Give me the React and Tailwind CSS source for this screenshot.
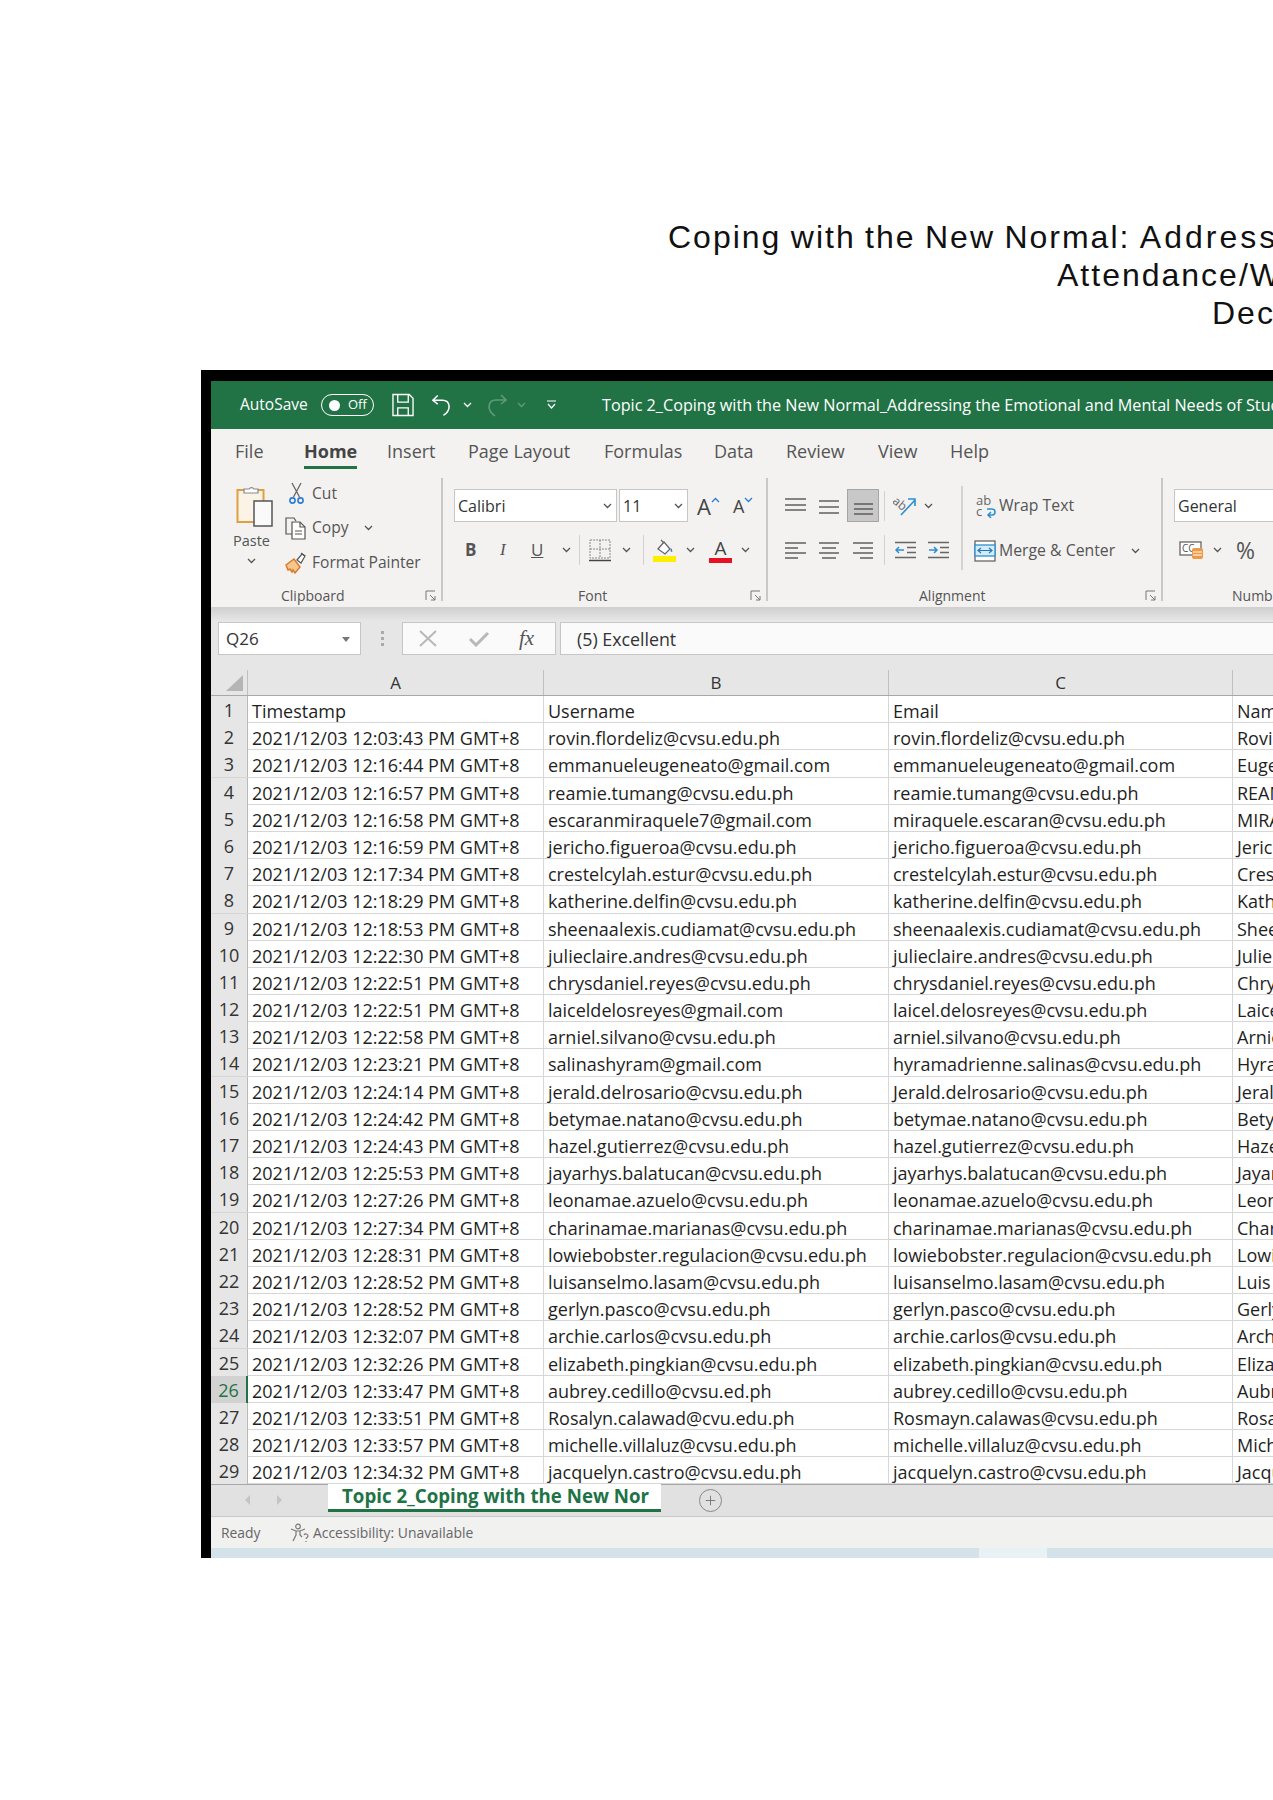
import React from "react";
import { Plus } from "lucide-react";

const rows = [
  ["Timestamp", "Username", "Email", "Name"],
  ["2021/12/03 12:03:43 PM GMT+8", "rovin.flordeliz@cvsu.edu.ph", "rovin.flordeliz@cvsu.edu.ph", "Rovin"],
  ["2021/12/03 12:16:44 PM GMT+8", "emmanueleugeneato@gmail.com", "emmanueleugeneato@gmail.com", "Eugene"],
  ["2021/12/03 12:16:57 PM GMT+8", "reamie.tumang@cvsu.edu.ph", "reamie.tumang@cvsu.edu.ph", "REAMIE"],
  ["2021/12/03 12:16:58 PM GMT+8", "escaranmiraquele7@gmail.com", "miraquele.escaran@cvsu.edu.ph", "MIRAQUELE"],
  ["2021/12/03 12:16:59 PM GMT+8", "jericho.figueroa@cvsu.edu.ph", "jericho.figueroa@cvsu.edu.ph", "Jericho"],
  ["2021/12/03 12:17:34 PM GMT+8", "crestelcylah.estur@cvsu.edu.ph", "crestelcylah.estur@cvsu.edu.ph", "Crestel"],
  ["2021/12/03 12:18:29 PM GMT+8", "katherine.delfin@cvsu.edu.ph", "katherine.delfin@cvsu.edu.ph", "Katherine"],
  ["2021/12/03 12:18:53 PM GMT+8", "sheenaalexis.cudiamat@cvsu.edu.ph", "sheenaalexis.cudiamat@cvsu.edu.ph", "Sheena"],
  ["2021/12/03 12:22:30 PM GMT+8", "julieclaire.andres@cvsu.edu.ph", "julieclaire.andres@cvsu.edu.ph", "Julie"],
  ["2021/12/03 12:22:51 PM GMT+8", "chrysdaniel.reyes@cvsu.edu.ph", "chrysdaniel.reyes@cvsu.edu.ph", "Chrys"],
  ["2021/12/03 12:22:51 PM GMT+8", "laiceldelosreyes@gmail.com", "laicel.delosreyes@cvsu.edu.ph", "Laicel"],
  ["2021/12/03 12:22:58 PM GMT+8", "arniel.silvano@cvsu.edu.ph", "arniel.silvano@cvsu.edu.ph", "Arniel"],
  ["2021/12/03 12:23:21 PM GMT+8", "salinashyram@gmail.com", "hyramadrienne.salinas@cvsu.edu.ph", "Hyram"],
  ["2021/12/03 12:24:14 PM GMT+8", "jerald.delrosario@cvsu.edu.ph", "Jerald.delrosario@cvsu.edu.ph", "Jerald"],
  ["2021/12/03 12:24:42 PM GMT+8", "betymae.natano@cvsu.edu.ph", "betymae.natano@cvsu.edu.ph", "Betymae"],
  ["2021/12/03 12:24:43 PM GMT+8", "hazel.gutierrez@cvsu.edu.ph", "hazel.gutierrez@cvsu.edu.ph", "Hazel"],
  ["2021/12/03 12:25:53 PM GMT+8", "jayarhys.balatucan@cvsu.edu.ph", "jayarhys.balatucan@cvsu.edu.ph", "Jayarhys"],
  ["2021/12/03 12:27:26 PM GMT+8", "leonamae.azuelo@cvsu.edu.ph", "leonamae.azuelo@cvsu.edu.ph", "Leonamae"],
  ["2021/12/03 12:27:34 PM GMT+8", "charinamae.marianas@cvsu.edu.ph", "charinamae.marianas@cvsu.edu.ph", "Charina"],
  ["2021/12/03 12:28:31 PM GMT+8", "lowiebobster.regulacion@cvsu.edu.ph", "lowiebobster.regulacion@cvsu.edu.ph", "Lowie"],
  ["2021/12/03 12:28:52 PM GMT+8", "luisanselmo.lasam@cvsu.edu.ph", "luisanselmo.lasam@cvsu.edu.ph", "Luis"],
  ["2021/12/03 12:28:52 PM GMT+8", "gerlyn.pasco@cvsu.edu.ph", "gerlyn.pasco@cvsu.edu.ph", "Gerlyn"],
  ["2021/12/03 12:32:07 PM GMT+8", "archie.carlos@cvsu.edu.ph", "archie.carlos@cvsu.edu.ph", "Archie"],
  ["2021/12/03 12:32:26 PM GMT+8", "elizabeth.pingkian@cvsu.edu.ph", "elizabeth.pingkian@cvsu.edu.ph", "Elizabeth"],
  ["2021/12/03 12:33:47 PM GMT+8", "aubrey.cedillo@cvsu.ed.ph", "aubrey.cedillo@cvsu.edu.ph", "Aubrey"],
  ["2021/12/03 12:33:51 PM GMT+8", "Rosalyn.calawad@cvu.edu.ph", "Rosmayn.calawas@cvsu.edu.ph", "Rosalyn"],
  ["2021/12/03 12:33:57 PM GMT+8", "michelle.villaluz@cvsu.edu.ph", "michelle.villaluz@cvsu.edu.ph", "Michelle"],
  ["2021/12/03 12:34:32 PM GMT+8", "jacquelyn.castro@cvsu.edu.ph", "jacquelyn.castro@cvsu.edu.ph", "Jacquelyn"],
];

const tabs = [
  ["File", "w-[69px]"],
  ["Home", "w-[83px]"],
  ["Insert", "w-[81px]"],
  ["Page Layout", "w-[136px]"],
  ["Formulas", "w-[110px]"],
  ["Data", "w-[72px]"],
  ["Review", "w-[92px]"],
  ["View", "w-[72px]"],
  ["Help", "w-[60px]"],
];

const Chev = ({ className = "", color = "#555" }) => (
  <svg width="9" height="6" viewBox="0 0 9 6" className={`shrink-0 ${className}`} fill="none" stroke={color} strokeWidth="1.3">
    <path d="M1 1l3.5 3.5L8 1" />
  </svg>
);

const Launcher = () => (
  <svg width="12" height="12" viewBox="0 0 12 12" fill="none" stroke="#777" strokeWidth="1">
    <path d="M1 10V1h9M5 5l5 5M10 6v4H6" />
  </svg>
);

// horizontal line stacks used by the alignment buttons
const Lines = ({ lines, width = 21, height = 18 }) => (
  <svg width={width} height={height} viewBox={`0 0 ${width} ${height}`} stroke="#555" strokeWidth="1.4">
    {lines.map(([x1, x2, y], i) => (
      <line key={i} x1={x1} x2={x2} y1={y} y2={y} />
    ))}
  </svg>
);

const PasteIcon = () => (
  <svg width="38" height="44" viewBox="0 0 38 44" fill="none">
    <rect x="1.5" y="7" width="26" height="32" fill="#fbf3e6" stroke="#e0a040" strokeWidth="2" />
    <path d="M8 9V6h5a3 3 0 0 1 5 0h4v4H8z" fill="#fff" stroke="#888" strokeWidth="1.2" />
    <rect x="18" y="18" width="18" height="25" fill="#fafafa" stroke="#555" strokeWidth="1.5" />
  </svg>
);

const Scissors = () => (
  <svg width="15" height="23" viewBox="0 0 15 23" fill="none">
    <path d="M3 1l7.500 14M12 1L4.500 15" stroke="#666" strokeWidth="1.3" />
    <circle cx="3.500" cy="18.500" r="2.600" stroke="#2b7cd3" strokeWidth="1.600" />
    <circle cx="11.500" cy="18.500" r="2.600" stroke="#2b7cd3" strokeWidth="1.600" />
  </svg>
);

const CopyIcon = () => (
  <svg width="22" height="23" viewBox="0 0 22 23" fill="none" stroke="#555" strokeWidth="1.2">
    <path d="M7 17H1V1h8l2 3" />
    <path d="M7 5h8l5 5v12H7z" fill="#fff" />
    <path d="M15 5v5h5M10 14h7M10 17h7" />
  </svg>
);

const PainterIcon = () => (
  <svg width="22" height="22" viewBox="0 0 22 22" fill="none">
    <path d="M1 13l8-6 6 8-5 6-2-3-1 2-2-3-2 1z" fill="#f6c78b" stroke="#d9782b" strokeWidth="1.4" />
    <path d="M12 8l5-6 3 2-4 7z" fill="#fff" stroke="#555" strokeWidth="1.2" />
    <path d="M16 1l4 3" stroke="#555" strokeWidth="1.2" />
  </svg>
);

const BorderIcon = () => (
  <svg width="22" height="23" viewBox="0 0 22 23" fill="none" stroke="#888" strokeWidth="1" strokeDasharray="2 1">
    <rect x="1" y="1" width="20" height="18" />
    <path d="M11 1v18M1 10h20" />
    <path d="M0 21.500h22" stroke="#444" strokeWidth="1.500" strokeDasharray="none" />
  </svg>
);

const FillIcon = () => (
  <svg width="23" height="24" viewBox="0 0 23 24" fill="none">
    <path d="M5 11l6-7 6 7-5 5z" fill="#fff" stroke="#666" strokeWidth="1.3" />
    <path d="M8 2l3 3" stroke="#666" strokeWidth="1.3" />
    <path d="M18 10c1 2 2 3 1 4-1 0-2-1-1-4z" fill="#2b7cd3" />
    <rect y="18" width="23" height="6" fill="#ffee00" />
  </svg>
);

const OrientIcon = () => (
  <svg width="24" height="22" viewBox="0 0 24 22" fill="none">
    <text x="0" y="12" fontSize="12" fill="#666" transform="rotate(40 6 8)" fontFamily="Open Sans, sans-serif">ab</text>
    <path d="M8 20L22 5M15 4h7v7" stroke="#2b8fd3" strokeWidth="1.600" />
  </svg>
);

const WrapIcon = () => (
  <svg width="21" height="24" viewBox="0 0 21 24" fill="none">
    <text x="0" y="11" fontSize="13" fill="#666" fontFamily="Open Sans, sans-serif">ab</text>
    <text x="0" y="22" fontSize="13" fill="#666" fontFamily="Open Sans, sans-serif">c</text>
    <path d="M11 15h5c4 0 4 6 0 6h-3M15 18l-3 3 3 3" stroke="#2b8fd3" strokeWidth="1.500" />
  </svg>
);

const MergeIcon = () => (
  <svg width="22" height="22" viewBox="0 0 22 22" fill="none">
    <rect x="1" y="1" width="20" height="20" fill="#fff" stroke="#666" strokeWidth="1.3" />
    <rect x="1" y="5" width="20" height="11" fill="#d6ebf8" stroke="#2b8fd3" strokeWidth="1.3" />
    <path d="M4 10.500h14M7 8l-3 2.500L7 13M15 8l3 2.500-3 2.500" stroke="#1e7ab8" strokeWidth="1.2" />
  </svg>
);

const IndentIcon = ({ flip }) => (
  <svg width="21" height="18" viewBox="0 0 21 18" fill="none">
    <path d="M0 1.500h21M12 6.500h9M12 11.500h9M0 16.500h21" stroke="#666" strokeWidth="1.4" />
    {flip ? (
      <path d="M1 9h8M6 6l3 3-3 3" stroke="#2b8fd3" strokeWidth="1.500" />
    ) : (
      <path d="M9 9H1M4 6L1 9l3 3" stroke="#2b8fd3" strokeWidth="1.500" />
    )}
  </svg>
);

const AccountingIcon = () => (
  <svg width="25" height="20" viewBox="0 0 25 20" fill="none">
    <rect x="1" y="2" width="21" height="13" fill="#fff" stroke="#666" strokeWidth="1.3" />
    <text x="3" y="12" fontSize="10" fill="#555" fontFamily="Open Sans, sans-serif">CC</text>
    <rect x="13" y="8" width="11" height="11" rx="2" fill="#ee9a45" />
    <path d="M14 12h9M14 15h9" stroke="#fff" strokeWidth="1" />
  </svg>
);

const AccessIcon = () => (
  <svg width="20" height="20" viewBox="0 0 20 20" fill="none" stroke="#777" strokeWidth="1.2">
    <circle cx="8" cy="3.500" r="2.300" />
    <path d="M1 6l5 2h4l5-2M6 8v4l-3 6M10 8v4l2 2" />
    <path d="M14 12c1-2 4-1 4 1 0 1.500-2 1.500-2 3M16 18v1" />
  </svg>
);

const Group = ({ className, label, labelClass, launcher = true, children }) => (
  <div className={`flex flex-col shrink-0 h-[123px] mt-[8px] border-[#c8c8c8] ${className}`}>
    <div className="flex-1 min-h-0">{children}</div>
    <div className="flex items-center h-[18px] -mb-[4px] text-[14px] leading-none text-[#555]">
      <span className={labelClass}>{label}</span>
      {launcher && (
        <span className="ml-auto mr-[4px] flex">
          <Launcher />
        </span>
      )}
    </div>
  </div>
);

const SelectBox = ({ className, children }) => (
  <div className={`flex items-center shrink-0 h-[33px] bg-white border border-[#c8c6c4] text-[16px] text-[#333] ${className}`}>
    {children}
  </div>
);

const Ribbon = () => (
  <div className="flex h-[137px] bg-[#f3f2f1] text-[#555] whitespace-nowrap">
    <Group className="w-[232px] border-r-2" label="Clipboard" labelClass="ml-[70px]">
      <div className="flex">
        <div className="flex flex-col items-center w-[38px] ml-[25px] mt-[5px]">
          <PasteIcon />
          <span className="text-[14.500px] leading-none mt-[7px] -ml-[7px]">Paste</span>
          <Chev className="mt-[9px] -ml-[7px]" />
        </div>
        <div className="flex flex-col ml-[11px] mt-[4px] gap-[11.500px] text-[15.600px] leading-none">
          <div className="flex items-center h-[23px]">
            <span className="w-[27px] pl-[4px]"><Scissors /></span>
            <span>Cut</span>
          </div>
          <div className="flex items-center h-[23px]">
            <span className="w-[27px]"><CopyIcon /></span>
            <span>Copy</span>
            <Chev className="ml-[15px]" />
          </div>
          <div className="flex items-center h-[23px]">
            <span className="w-[27px]"><PainterIcon /></span>
            <span>Format Painter</span>
          </div>
        </div>
      </div>
    </Group>

    <Group className="w-[325px] border-r-2" label="Font" labelClass="ml-[135px]">
      <div className="flex items-center ml-[11px] mt-[11px]">
        <SelectBox className="w-[163px] pl-[3px]">
          <span>Calibri</span>
          <Chev className="ml-auto mr-[4px]" />
        </SelectBox>
        <SelectBox className="w-[69px] ml-[2px] pl-[3px]">
          <span>11</span>
          <Chev className="ml-auto mr-[4px]" />
        </SelectBox>
        <span className="ml-[9px] text-[22px] leading-none text-[#444]">A</span>
        <Chev className="rotate-180 -mt-[12px]" color="#2b7cd3" />
        <span className="ml-[13px] text-[18px] leading-none text-[#444]">A</span>
        <Chev className="-mt-[12px]" color="#2b7cd3" />
      </div>
      <div className="flex items-center ml-[22px] mt-[13px] h-[30px] text-[17px] text-[#555]">
        <span className="font-bold w-[35px]">B</span>
        <span className="italic font-['Liberation_Serif',serif] w-[31px]">I</span>
        <span className="underline w-[31px]">U</span>
        <Chev />
        <span className="w-px h-[30px] bg-[#d0d0d0] ml-[8px]" />
        <span className="ml-[9px] flex"><BorderIcon /></span>
        <Chev className="ml-[11px]" />
        <span className="w-px h-[30px] bg-[#d0d0d0] ml-[12px]" />
        <span className="ml-[9px] flex"><FillIcon /></span>
        <Chev className="ml-[10px]" />
        <span className="ml-[14px] flex flex-col items-center w-[23px] text-[19px] leading-[20px] text-[#444]">
          A
          <span className="block w-[23px] h-[5px] bg-[#e81123]" />
        </span>
        <Chev className="ml-[9px]" />
      </div>
    </Group>

    <Group className="w-[395px] border-r-2" label="Alignment" labelClass="ml-[151px]">
      <div className="flex">
        <div className="flex flex-col ml-[17px]">
          <div className="flex items-center mt-[11px] h-[33px]">
            <span className="w-[34px]"><Lines lines={[[0, 21, 2], [0, 21, 8], [0, 21, 13]]} /></span>
            <span className="w-[28px]"><Lines lines={[[0, 20, 4], [0, 20, 10], [0, 20, 16]]} /></span>
            <span className="flex items-center justify-center w-[32px] h-[33px] bg-[#c8c8c8] border border-[#a5a5a5]">
              <Lines lines={[[1, 20, 7], [1, 20, 12], [1, 20, 17]]} />
            </span>
            <span className="w-px h-[30px] bg-[#d0d0d0] ml-[5px]" />
            <span className="ml-[8px]"><OrientIcon /></span>
            <Chev className="ml-[7px]" />
          </div>
          <div className="flex items-center mt-[13px] h-[30px]">
            <span className="w-[34px]"><Lines lines={[[0, 21, 2], [0, 13, 7], [0, 21, 12], [0, 13, 17]]} /></span>
            <span className="w-[34px]"><Lines lines={[[0, 20, 2], [3, 17, 7], [0, 20, 12], [3, 17, 17]]} /></span>
            <span className="w-[26px]"><Lines lines={[[0, 20, 2], [7, 20, 7], [0, 20, 12], [7, 20, 17]]} width={20} /></span>
            <span className="w-px h-[30px] bg-[#d0d0d0] ml-[5px]" />
            <span className="ml-[10px]"><IndentIcon /></span>
            <span className="ml-[12px]"><IndentIcon flip /></span>
          </div>
        </div>
        <span className="w-[2px] h-[84px] bg-[#d4d4d4] mt-[8px] ml-[12px]" />
        <div className="flex flex-col ml-[11px] text-[15.800px] leading-none">
          <div className="flex items-center mt-[11px] h-[33px]">
            <span className="ml-[2px] w-[23px]"><WrapIcon /></span>
            <span>Wrap Text</span>
          </div>
          <div className="flex items-center mt-[14px] h-[30px]">
            <span className="w-[25px]"><MergeIcon /></span>
            <span>Merge &amp; Center</span>
            <Chev className="ml-[16px]" />
          </div>
        </div>
      </div>
    </Group>

    <Group className="w-[300px]" label="Number" labelClass="ml-[69px]" launcher={false}>
      <div className="ml-[11px] mt-[11px]">
        <SelectBox className="w-[200px] pl-[3px]">General</SelectBox>
      </div>
      <div className="flex items-center ml-[16px] mt-[13px] h-[30px]">
        <AccountingIcon />
        <Chev className="ml-[9px]" />
        <span className="ml-[14px] text-[23px] leading-none text-[#555]">%</span>
      </div>
    </Group>
  </div>
);

const FormulaBar = () => (
  <div className="bg-[#e6e6e6]">
    <div className="h-[15px] bg-gradient-to-b from-[#cfcfcf] to-[#e8e8e8]" />
    <div className="flex items-center h-[33px] text-[17px] text-[#333]">
      <div className="flex items-center w-[143px] h-[33px] ml-[7px] pl-[7px] pt-[1px] bg-white border border-[#c8c6c4]">
        <span>Q26</span>
        <span className="ml-auto mr-[10px] w-0 h-0 border-x-[4px] border-x-transparent border-t-[5px] border-t-[#777]" />
      </div>
      <span className="flex flex-col gap-[3px] ml-[20px]">
        <span className="w-[3px] h-[3px] bg-[#aaa]" />
        <span className="w-[3px] h-[3px] bg-[#aaa]" />
        <span className="w-[3px] h-[3px] bg-[#aaa]" />
      </span>
      <div className="flex items-center w-[154px] h-[33px] ml-[18px] bg-[#fafafa] border border-[#c8c6c4]">
        <svg width="18" height="17" viewBox="0 0 18 17" fill="none" stroke="#b8b8b8" strokeWidth="2" className="ml-[16px]">
          <path d="M1 1l16 15M17 1L1 16" />
        </svg>
        <svg width="20" height="16" viewBox="0 0 20 16" fill="none" stroke="#b8b8b8" strokeWidth="3" className="ml-[32px]">
          <path d="M1 8l6 6L19 2" />
        </svg>
        <span className="ml-[30px] italic font-['Liberation_Serif',serif] text-[21px] text-[#555]">fx</span>
      </div>
      <div className="flex items-center flex-1 h-[33px] ml-[4px] pl-[16px] pt-[1px] text-[17.800px] bg-[#fafafa] border-y border-l border-[#c8c6c4]">
        (5) Excellent
      </div>
    </div>
    <div className="grid grid-cols-[37px_296px_345px_344px_1fr] h-[41px] pt-[15px] border-b border-[#a8a8a8] text-[17px] leading-[25px] text-[#333] text-center">
      <div className="flex items-end justify-end pr-[4px] pb-[4px] border-r border-[#c0c0c0]">
        <span className="w-0 h-0 border-l-[17px] border-l-transparent border-b-[16px] border-b-[#b5b5b5]" />
      </div>
      <div className="border-r border-[#c0c0c0]">A</div>
      <div className="border-r border-[#c0c0c0]">B</div>
      <div className="border-r border-[#c0c0c0]">C</div>
      <div />
    </div>
  </div>
);

const Sheet = () => (
  <div className="bg-white text-[18px] leading-[26px] text-[#1f1f1f] whitespace-nowrap">
    {rows.map((row, i) => {
      const selected = i + 1 === 26;
      return (
        <div key={i} className="grid grid-cols-[37px_296px_345px_344px_1fr] h-[27.200px] border-b border-[#d6d6d6]">
          <div
            className={`text-center border-r pt-[1px] text-[18px] ${
              selected
                ? "bg-[#d2d2d2] text-[#217346] border-r-2 border-[#217346]"
                : "bg-[#e6e6e6] text-[#333] border-[#b8b8b8]"
            }`}
          >
            {i + 1}
          </div>
          {row.map((cell, j) => (
            <div key={j} className={`pl-[4px] pt-[2px] overflow-hidden ${j < 3 ? "border-r border-[#d6d6d6]" : ""}`}>
              {cell}
            </div>
          ))}
        </div>
      );
    })}
  </div>
);

const SheetTabs = () => (
  <div className="flex h-[33px] bg-[#e1e1e1] border-t border-[#a8a8a8] border-b border-b-[#c8c8c8]">
    <span className="ml-[34px] mt-[10px] w-0 h-0 border-y-[5px] border-y-transparent border-r-[5px] border-r-[#c4c4c4]" />
    <span className="ml-[27px] mt-[10px] w-0 h-0 border-y-[5px] border-y-transparent border-l-[5px] border-l-[#c4c4c4]" />
    <div className="ml-[46px] w-[333px] h-[28px] -mt-px pl-[14px] bg-white border-b-[3px] border-[#217346] text-[18.700px] leading-[23px] font-bold text-[#217346] whitespace-nowrap">
      Topic 2_Coping with the New Nor
    </div>
    <span className="flex items-center justify-center w-[23px] h-[23px] ml-[38px] mt-[4px] rounded-full border border-[#888]">
      <Plus className="w-[15px] h-[15px] text-[#777]" strokeWidth={1.500} />
    </span>
  </div>
);

const StatusBar = () => (
  <div className="flex items-center h-[31px] pl-[10px] bg-[#f1f1f0] text-[13.900px] text-[#666]">
    <span className="w-[40px]">Ready</span>
    <span className="ml-[29px] flex"><AccessIcon /></span>
    <span className="ml-[3px]">Accessibility: Unavailable</span>
  </div>
);

export default function App() {
  return (
    <div className="w-[1273px] h-[1800px] overflow-hidden bg-white font-['Open_Sans',sans-serif]">
      <div className="pt-[218px] pb-[38px] text-[32px] leading-[38px] tracking-[2px] [word-spacing:-1.500px] text-[#111] whitespace-nowrap font-['Liberation_Sans',Arial,sans-serif]">
        <p className="pl-[668px]">
          Coping with the New Normal: <span className="tracking-[3px]">Addressing</span>
        </p>
        <p className="pl-[1057px]">Attendance/Webinar</p>
        <p className="pl-[1212px]">December</p>
      </div>

      <div className="ml-[201px] border-l-[10px] border-t-[11px] border-black overflow-hidden">
        <div className="flex items-center h-[48px] bg-[#217346] text-white whitespace-nowrap">
          <span className="shrink-0 ml-[29px] w-[71px] text-[15.500px]">AutoSave</span>
          <span className="shrink-0 flex items-center w-[53px] h-[22px] ml-[10px] pl-[7px] rounded-full border border-white text-[13px]">
            <span className="w-[11px] h-[11px] rounded-full bg-white" />
            <span className="ml-[8px]">Off</span>
          </span>
          <svg width="22" height="24" viewBox="0 0 23 24" fill="none" stroke="#fff" strokeWidth="1.400" className="shrink-0 ml-[18px]">
            <path d="M1 1h17l4 4v18H1zM6 1v8h11V1M6 23v-8h11v8" />
          </svg>
          <svg width="20" height="24" viewBox="0 0 21 24" fill="none" stroke="#fff" strokeWidth="1.600" className="shrink-0 ml-[18px]">
            <path d="M6 2L1 7l5 4M1 7h10c8 0 10 10 1 16" />
          </svg>
          <Chev className="ml-[11px]" color="#fff" />
          <svg width="21" height="24" viewBox="0 0 21 24" fill="none" stroke="#5f9a7d" strokeWidth="1.600" className="shrink-0 ml-[14px]">
            <path d="M15 2l5 5-5 4M20 7H10C2 7 0 17 9 23" />
          </svg>
          <Chev className="ml-[10px]" color="#5f9a7d" />
          <svg width="9" height="10" viewBox="0 0 9 10" fill="none" stroke="#fff" strokeWidth="1.200" className="shrink-0 ml-[21px]">
            <path d="M0 1h9M1 4l3.500 4L8 4" />
          </svg>
          <span className="shrink-0 ml-[46px] text-[16.200px]">
            Topic 2_Coping with the New Normal_Addressing the Emotional and Mental Needs of Students
          </span>
        </div>

        <div className="flex items-start h-[41px] pt-[10px] pl-[24px] bg-[#f3f2f1] text-[18px] leading-[24px] text-[#555] whitespace-nowrap">
          {tabs.map(([name, width]) => (
            <div key={name} className={`shrink-0 ${width}`}>
              <span className={name === "Home" ? "inline-block font-bold text-[#444] pb-[3px] border-b-[3px] border-[#217346]" : ""}>
                {name}
              </span>
            </div>
          ))}
        </div>

        <Ribbon />
        <FormulaBar />
        <Sheet />
        <SheetTabs />
        <StatusBar />
        <div className="flex h-[10px] bg-[#d4e3ea]">
          <span className="ml-[768px] w-[68px] bg-[#e8f1f4]" />
        </div>
      </div>
    </div>
  );
}
